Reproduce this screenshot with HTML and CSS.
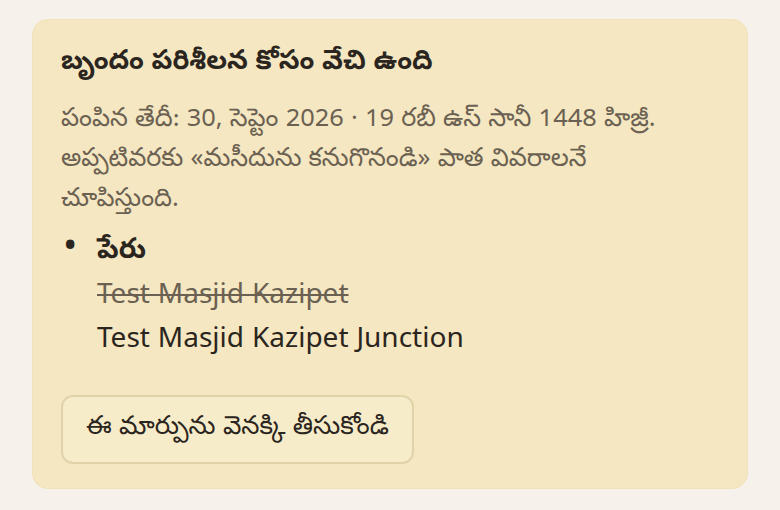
FILE: index.html
```html
<!DOCTYPE html>
<html lang="te">
<head>
<meta charset="utf-8">
<link rel="stylesheet" href="styles.css">
</head>
<body>
<section class="card">
  <h2 class="title">బృందం పరిశీలన కోసం వేచి ఉంది</h2>
  <p class="meta">పంపిన తేదీ: 30, సెప్టెం 2026 · 19 రబీ ఉస్ సానీ 1448 హిజ్రీ. అప్పటివరకు «మసీదును కనుగొనండి» పాత వివరాలనే చూపిస్తుంది.</p>
  <ul class="changes">
    <li>
      <div class="field">పేరు</div>
      <div class="old">Test Masjid Kazipet</div>
      <div class="new">Test Masjid Kazipet Junction</div>
    </li>
  </ul>
  <button class="undo">ఈ మార్పును వెనక్కి తీసుకోండి</button>
</section>
</body>
</html>
```

FILE: styles.css
```css
html, body {
  margin: 0;
  padding: 0;
  background: #f6f1ea;
}
body {
  padding: 19px 32px;
  font-family: "Noto Sans Telugu", "Noto Sans", sans-serif;
  color: #2b2520;
}
.card {
  background: #f5e7c1;
  border: 1px solid #f1e2b8;
  border-radius: 16px;
  padding: 27px 28px 26px;
  height: 470px;
  box-sizing: border-box;
}
.title {
  margin: 0 0 19px;
  font-size: 27px;
  font-weight: 700;
  line-height: 1.3;
}
.meta {
  margin: 0;
  max-width: 630px;
  font-size: 25.4px;
  line-height: 40px;
  color: #6b6152;
}
.changes {
  margin: 10px 0 0;
  padding-left: 36px;
  font-size: 28px;
  line-height: 44.5px;
}
.changes li::marker {
  content: "\2022\00a0\00a0";
  font: 38px/0 "Noto Sans", sans-serif;
}
.field {
  font-weight: 700;
}
.old {
  color: #6b6152;
  text-decoration: line-through;
}
.undo {
  margin-top: 30px;
  font-family: inherit;
  font-size: 25.9px;
  color: #2b2520;
  background: #f7ecca;
  border: 2px solid #e0d3a9;
  border-radius: 12px;
  padding: 0 23px;
  height: 69px;
}
```
